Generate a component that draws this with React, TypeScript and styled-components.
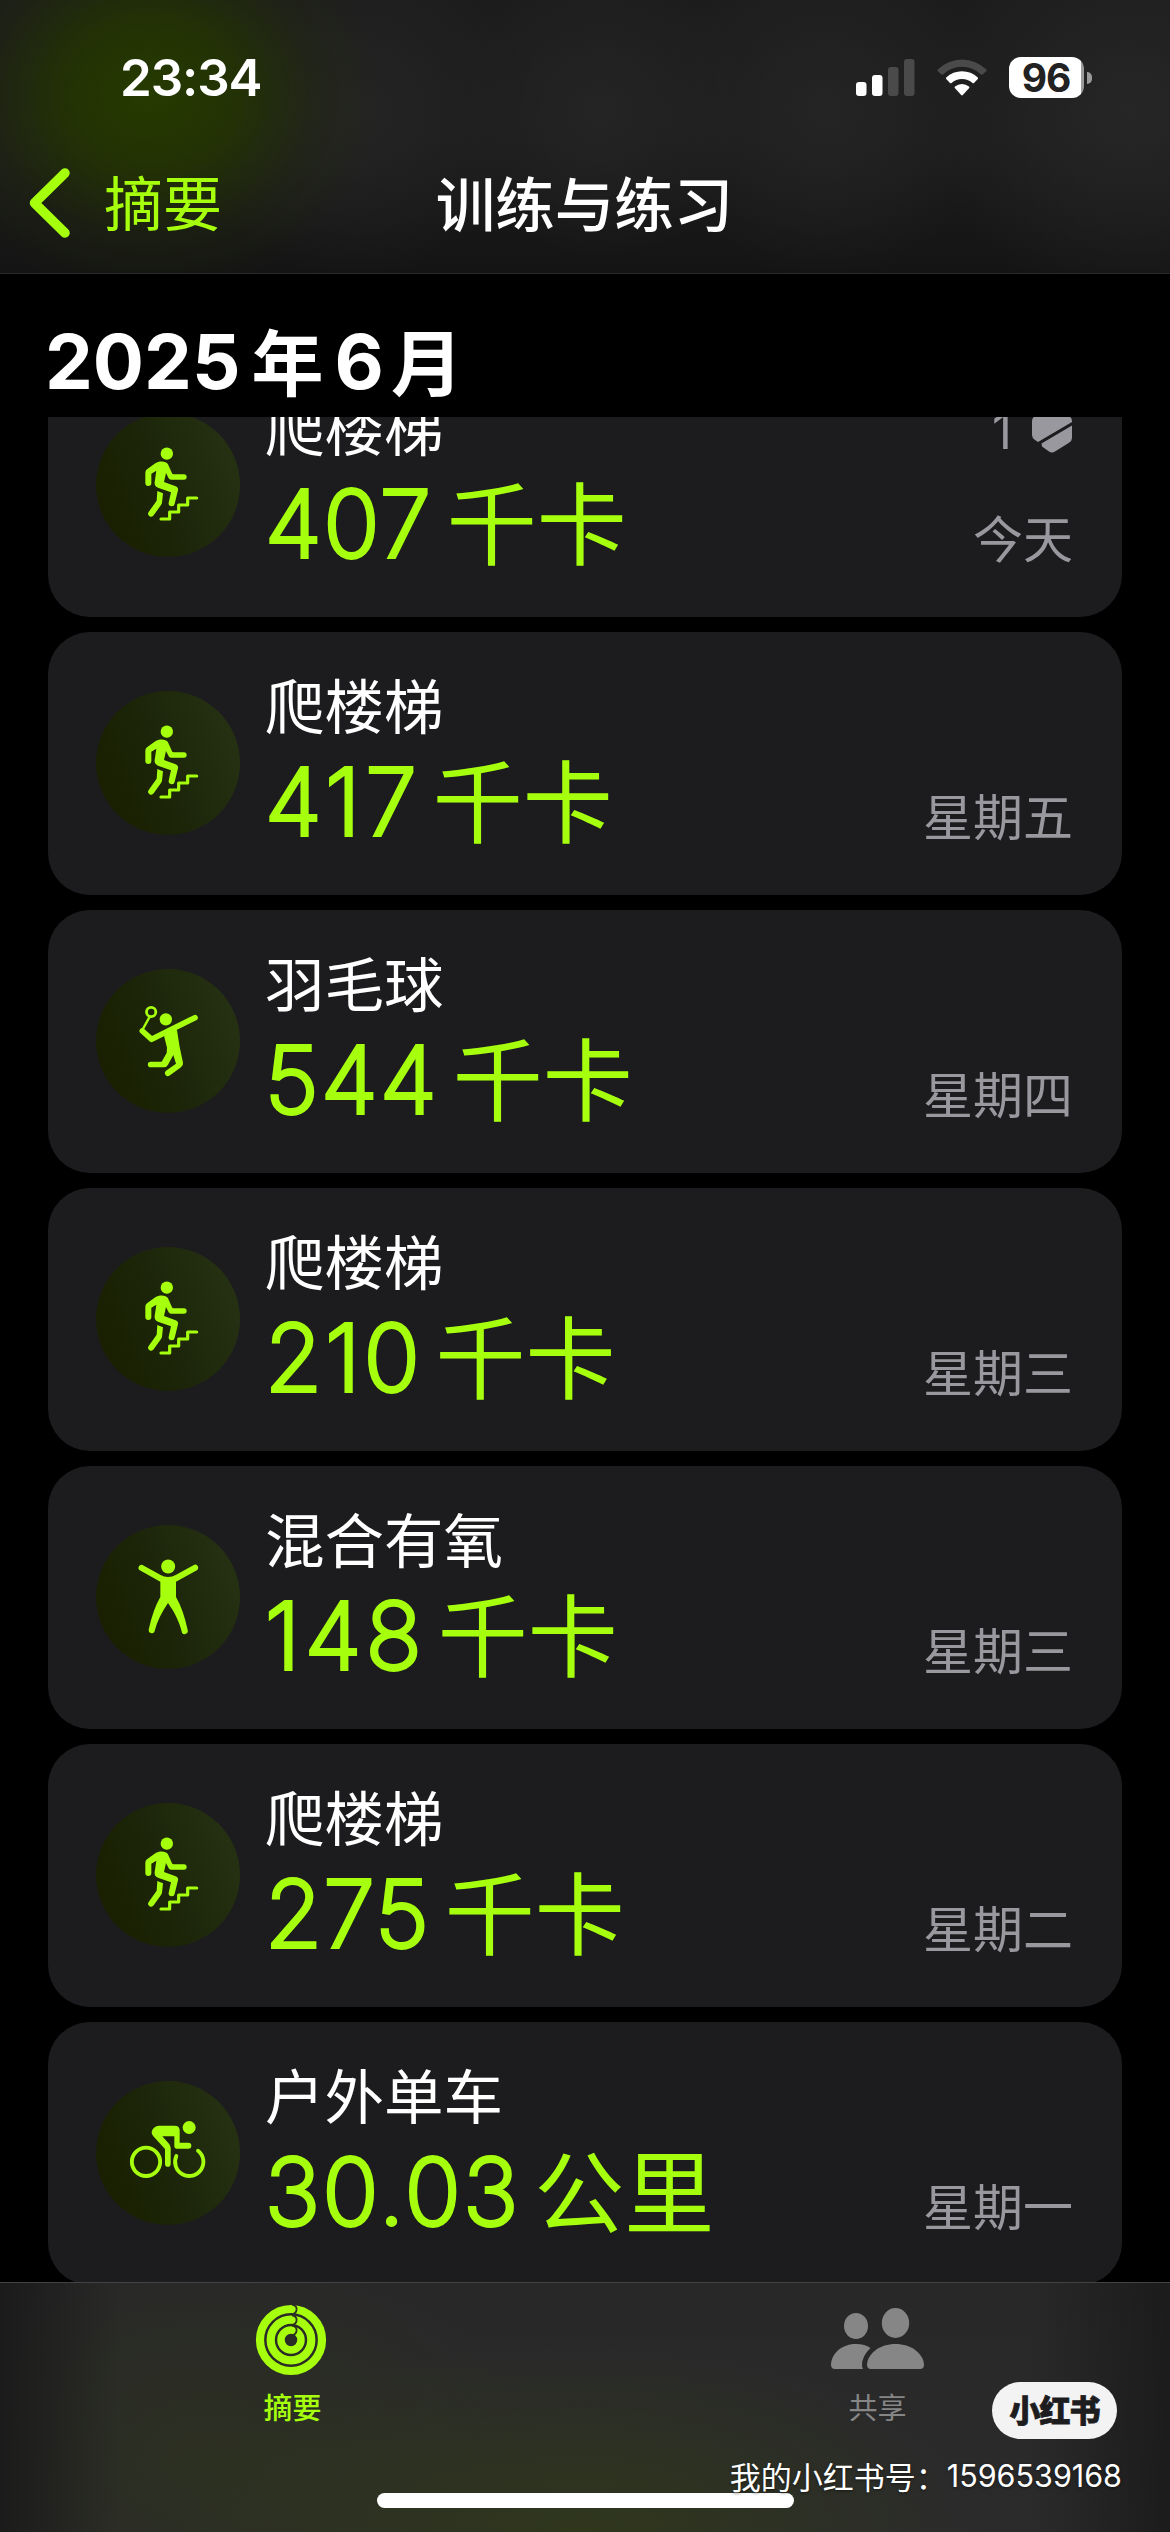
import React from "react";
import styled, { createGlobalStyle } from "styled-components";

const LIME = "#a6ff0d";
const HAN = '"Noto Sans CJK SC", sans-serif';
const LATIN = 'Inter, "Noto Sans CJK SC", sans-serif';

const Global = createGlobalStyle`
  * { box-sizing: border-box; }
  html, body { margin: 0; padding: 0; background: #000; }
  body { font-family: ${LATIN}; color: #fff; }
  svg { display: block; }
`;

const Screen = styled.div`
  position: relative;
  width: 1170px;
  height: 2532px;
  display: flex;
  flex-direction: column;
  overflow: hidden;
  background: #000;
`;

const Header = styled.header`
  flex: none;
  height: 274px;
  display: flex;
  flex-direction: column;
  border-bottom: 1px solid #2a2a2a;
  background:
    radial-gradient(ellipse 230px 200px at 150px 95px, #253a00 0%, rgba(36, 54, 0, 0.85) 35%, rgba(34, 44, 8, 0.35) 70%, rgba(30, 30, 30, 0) 100%),
    radial-gradient(circle 170px at 355px 110px, rgba(37, 37, 37, 0.9), rgba(37, 37, 37, 0)),
    radial-gradient(circle 150px at 600px 110px, rgba(37, 37, 37, 0.9), rgba(37, 37, 37, 0)),
    radial-gradient(circle 170px at 825px 110px, rgba(37, 37, 37, 0.9), rgba(37, 37, 37, 0)),
    radial-gradient(circle 200px at 1130px 110px, rgba(39, 39, 39, 0.9), rgba(39, 39, 39, 0)),
    linear-gradient(#1c1c1c 0%, #1d1d1d 50%, #141414 100%);
`;

const StatusBar = styled.div`
  height: 155px;
  padding: 0 78px 0 120px;
  display: flex;
  align-items: center;
  justify-content: space-between;
`;

const Clock = styled.span`
  font-size: 51px;
  line-height: 60px;
  font-weight: 600;
  letter-spacing: -1.1px;
`;

const StatusIcons = styled.div`
  display: flex;
  align-items: center;
  gap: 22px;
`;

const Battery = styled.div`
  display: flex;
  align-items: center;
  gap: 3px;
`;

const BatteryBody = styled.div`
  width: 75px;
  height: 41px;
  border-radius: 12px;
  background: linear-gradient(90deg, #fff 72px, #9b9b9b 72px);
  color: #222;
  font-size: 39px;
  line-height: 41px;
  font-weight: 700;
  letter-spacing: -1px;
  text-align: center;
  padding-right: 1px;
`;

const BatteryNub = styled.div`
  width: 5px;
  height: 12px;
  border-radius: 0 5px 5px 0;
  background: #9b9b9b;
`;

const NavBar = styled.nav`
  height: 96px;
  padding: 0 28px;
  display: grid;
  grid-template-columns: 1fr auto 1fr;
  align-items: center;
  font-family: ${HAN};
`;

const Back = styled.span`
  display: flex;
  align-items: center;
  gap: 33px;
  color: ${LIME};
  font-size: 59px;
  line-height: 70px;
`;

const BackLabel = styled.span`
  margin-top: -5px;
`;

const NavTitle = styled.h1`
  margin: -5px 0 0 -1px;
  font-size: 59.5px;
  line-height: 70px;
  font-weight: 500;
`;

const MonthHeading = styled.h2`
  flex: none;
  height: 143px;
  margin: 0;
  padding: 31px 0 0 45px;
  display: flex;
  align-items: center;
  font-weight: 700;
  line-height: 76px;
  font-size: 76px;
`;

const MonthDigits = styled.span<{ $gap?: number }>`
  font-weight: 650;
  letter-spacing: 0px;
  margin-right: ${(p) => p.$gap ?? 11}px;
`;

const MonthHan = styled.span<{ $gap?: number }>`
  font-family: ${HAN};
  font-size: 72px;
  margin-top: -5px;
  margin-right: ${(p) => p.$gap ?? 0}px;
`;

const List = styled.main`
  flex: 1;
  min-height: 0;
  overflow: hidden;
  padding: 0 48px;
`;

const Cards = styled.div`
  margin-top: -63px;
  display: flex;
  flex-direction: column;
  gap: 15px;
`;

const Card = styled.article`
  height: 263px;
  flex: none;
  padding: 0 49px 1px 48px;
  display: flex;
  align-items: center;
  border-radius: 42px;
  background: #1c1c1e;
`;

const Disc = styled.div`
  width: 144px;
  height: 144px;
  flex: none;
  border-radius: 50%;
  background: linear-gradient(70deg, #191f00 10%, #1d260a 50%, #263313 95%);
`;

const Info = styled.div`
  flex: 1;
  height: 262px;
  margin-left: 25px;
  padding-top: 36px;
  display: flex;
  flex-direction: column;
`;

const Name = styled.span`
  font-family: ${HAN};
  font-size: 59.5px;
  line-height: 70px;
`;

const Metric = styled.span`
  display: flex;
  align-items: center;
  height: 110px;
  margin-top: 8px;
  line-height: 110px;
  color: ${LIME};
`;

const Digits = styled.span<{ $tracking: number }>`
  font-size: 92.5px;
  font-weight: 200;
  -webkit-text-stroke: 4px ${LIME};
  stroke-linejoin: round;
  letter-spacing: ${(p) => p.$tracking}px;
  margin-right: ${(p) => -p.$tracking}px;
`;

const Unit = styled.span`
  margin: -8px 0 0 16px;
  font-family: ${HAN};
  font-size: 90px;
`;

const Side = styled.div`
  height: 262px;
  padding: 47px 0 50px;
  display: flex;
  flex-direction: column;
  align-items: flex-end;
  justify-content: space-between;
  color: #99989f;
`;

const Award = styled.span`
  display: flex;
  align-items: center;
  gap: 20px;
  height: 60px;
  margin-right: 1px;
  font-size: 49px;
  font-weight: 400;
`;

const Day = styled.span`
  margin-top: auto;
  font-family: ${HAN};
  font-size: 50px;
  line-height: 60px;
  font-weight: 400;
`;

const TabBar = styled.footer`
  flex: none;
  height: 250px;
  display: grid;
  grid-template-columns: 1fr 1fr;
  padding: 21px 0 0;
  border-top: 1px solid #434345;
  background:
    linear-gradient(90deg, rgba(26, 26, 26, 0.95) 0, rgba(28, 28, 28, 0) 120px, rgba(28, 28, 28, 0) 1030px, rgba(26, 26, 26, 0.9) 100%),
    radial-gradient(ellipse 400px 190px at 580px 250px, rgba(48, 56, 26, 0.9), rgba(44, 48, 34, 0)),
    radial-gradient(ellipse 320px 220px at 210px 180px, rgba(44, 48, 32, 0.95), rgba(44, 48, 34, 0)),
    linear-gradient(#282829, #2b2b2c);
`;

const Tab = styled.div<{ $active?: boolean }>`
  display: flex;
  flex-direction: column;
  align-items: center;
  color: ${(p) => (p.$active ? LIME : "#868686")};
  font-family: ${HAN};
  font-size: 29px;
  line-height: 36px;
  font-weight: ${(p) => (p.$active ? 500 : 400)};
`;

const TabIcon = styled.div<{ $nudge?: number; $drop?: number }>`
  height: 84px;
  padding-top: ${(p) => p.$drop ?? 0}px;
  margin-right: ${(p) => p.$nudge ?? 0}px;
`;

const HomeIndicator = styled.div`
  position: absolute;
  left: 377px;
  bottom: 24px;
  width: 417px;
  height: 15px;
  border-radius: 8px;
  background: #fff;
`;

const Watermark = styled.div`
  position: absolute;
  right: 48px;
  bottom: 34px;
  display: flex;
  flex-direction: column;
  align-items: flex-end;
  gap: 14px;
`;

const BrandPill = styled.span`
  width: 125px;
  height: 57px;
  margin-right: 5px;
  border-radius: 29px;
  background: #f3f3f3;
  color: #1d1d1f;
  font-family: ${HAN};
  font-weight: 900;
  font-size: 31px;
  line-height: 54px;
  letter-spacing: -1px;
  -webkit-text-stroke: 0.8px #1d1d1f;
  text-align: center;
`;

const Account = styled.span`
  display: flex;
  align-items: center;
  height: 45px;
  font-family: ${HAN};
  font-size: 31px;
  white-space: nowrap;
  text-shadow: 0 1px 3px rgba(0, 0, 0, 0.5);
`;

const AccountNumber = styled.span`
  font-family: ${LATIN};
  font-size: 30.5px;
  letter-spacing: 0;
`;

type Kind = "stairs" | "badminton" | "cardio" | "cycling";

const StairsIcon = () => (
  <svg width="144" height="144" viewBox="18 34 432 432" fill="none" stroke={LIME} strokeLinecap="round" strokeLinejoin="round">
    <circle cx="230.500" cy="156" r="18.500" fill={LIME} stroke="none" />
    <path d="M196 185 C208 177 228 178 234 188 L246 215 Q247 218 251 218 H282 A8 8 0 0 1 282 234 H243 Q238 234 236 230 L228 214 L222 241 L257 254 Q266 258 264 266 L254 306 A8.500 8.500 0 0 1 236 303 L243 272 L204 258 Q192 253 194 241 L199 207 L184 216 V244 A8.500 8.500 0 0 1 166 244 V213 Q166 206 172 202 Z" fill={LIME} stroke="none" />
    <path d="M202 268 L219 275 L216 303 Q215 307 213 310 L191 341 A9 9 0 0 1 176 331 L200 297 Z" fill={LIME} stroke="none" />
    <path d="M213 352 H239 V331 H266 V310 H293 V289 H320" strokeWidth="9.500" />
  </svg>
);

const BadmintonIcon = () => (
  <svg width="144" height="144" viewBox="18 28 432 432" fill="none" stroke={LIME} strokeLinecap="round" strokeLinejoin="round">
    <circle cx="183.500" cy="157" r="14" strokeWidth="8.500" />
    <circle cx="227.500" cy="179" r="18.500" fill={LIME} stroke="none" />
    <path d="M178 173 L156 213" strokeWidth="7" />
    <path d="M157 214 L185 239 L245 209 L315 174" strokeWidth="17" />
    <path d="M222 228 L250 209 L261 212 L269 262 L279 309 Q280 317 273 323 L238 348 A9 9 0 0 1 227 334 L258 312 L250 286 L234 315 Q230 323 221 323 H182 A8.500 8.500 0 0 1 182 306 H215 L230 280 L231 264 Z" fill={LIME} stroke="none" />
  </svg>
);

const CardioIcon = () => (
  <svg width="144" height="144" viewBox="18 46 432 432" fill={LIME}>
    <circle cx="234.500" cy="170.500" r="21" />
    <path d="M156 165 L212 196 Q222 202 234 202 Q247 202 257 196 L313 165 A9.500 9.500 0 0 1 322 181 L258 216 V262 Q280 300 293 361 A9.500 9.500 0 0 1 276 369 C268 335 253 307 234 280 C216 307 201 335 193 367 A9.500 9.500 0 0 1 176 360 Q189 300 211 262 V216 L148 181 A9.500 9.500 0 0 1 156 165 Z" />
  </svg>
);

const CyclingIcon = () => (
  <svg width="144" height="144" viewBox="18 34 432 432" fill="none" stroke={LIME} strokeLinecap="round" strokeLinejoin="round">
    <circle cx="168" cy="276.500" r="42.500" strokeWidth="11.500" />
    <path d="M324 243 A42.500 42.500 0 1 1 259 259" strokeWidth="11.500" />
    <circle cx="297.500" cy="173.500" r="19.500" fill={LIME} stroke="none" />
    <path d="M207 168 H254 Q268 168 269 181 V219 H295 A9 9 0 0 1 295 237 H261 Q253 237 253 229 V200 H217 L235 220 Q242 227 242 234 V283 A8.500 8.500 0 0 1 225 283 V238 L190 200 Q184 193 185 186 Q190 169 207 168 Z" fill={LIME} stroke="none" />
  </svg>
);

const icons: Record<Kind, React.FC> = {
  stairs: StairsIcon,
  badminton: BadmintonIcon,
  cardio: CardioIcon,
  cycling: CyclingIcon,
};

const SignalIcon = () => (
  <svg width="59" height="37" viewBox="0 0 59 37">
    <rect x="0" y="23" width="10.500" height="14" rx="3" fill="#fff" />
    <rect x="16" y="16" width="10.500" height="21" rx="3" fill="#fff" />
    <rect x="32" y="8" width="10.500" height="29" rx="3" fill="#4a4a4a" />
    <rect x="48" y="0" width="10.500" height="37" rx="3" fill="#4a4a4a" />
  </svg>
);

const WifiIcon = () => (
  <svg width="50" height="37" viewBox="0 0 50 37">
    <path d="M0.600 10.500 A35 35 0 0 1 49.400 10.500 Q50 11.300 49.400 12 L45.500 15.500 Q44.800 16 44 15.400 A27.500 27.500 0 0 0 6 15.400 Q5.200 16 4.500 15.500 L0.600 12 Q0 11.300 0.600 10.500 Z" fill="#4a4a4a" />
    <path d="M9.200 18.500 A23 23 0 0 1 40.800 18.500 Q41.400 19.300 40.800 20 L37 24 Q36.300 24.600 35.500 24 A15.500 15.500 0 0 0 14.500 24 Q13.700 24.600 13 24 L9.200 20 Q8.600 19.300 9.200 18.500 Z" fill="#fff" />
    <path d="M18 27.500 A11 11 0 0 1 32 27.500 Q32.800 28.300 32.200 29 L25.800 36 Q25 36.800 24.200 36 L17.800 29 Q17.200 28.300 18 27.500 Z" fill="#fff" />
  </svg>
);

const ChevronIcon = () => (
  <svg width="43" height="72" viewBox="0 0 43 72" fill="none" stroke={LIME} strokeWidth="9.500" strokeLinecap="round" strokeLinejoin="round">
    <path d="M37 6 L6.500 36 L37 66" />
  </svg>
);

const AwardIcon = () => (
  <svg width="40" height="46" viewBox="0 0 40 46" fill="currentColor">
    <path d="M17 1.500 Q20 0 23 1.500 L37 8 Q40 10 40 13 V14 L6 34 L3 32 Q0 30 0 27 V13 Q0 10 3 8 Z" />
    <path d="M40 17.500 V30 Q40 33 37 34.700 L23 43.500 Q20 45.500 17 43.500 L10 38.500 L9.500 35.500 Z" />
  </svg>
);

const RingsIcon = () => (
  <svg width="72" height="72" viewBox="-36 -36 72 72" fill="none">
    {[31, 20.3, 10].map((r, i) => (
      <React.Fragment key={r}>
        <circle r={r} stroke={LIME} strokeWidth={i === 2 ? 7.5 : 8.2} />
        <path d={`M1 ${-r - 4.3} Q5.600 ${-r - 3.5} 5.600 ${-r} Q5.600 ${-r + 3.8} 2 ${-r + 5}`} stroke="#2b2f22" strokeWidth="1.800" />
      </React.Fragment>
    ))}
  </svg>
);

const PeopleIcon = () => (
  <svg width="93" height="72" viewBox="0 0 93 72" fill="currentColor">
    <ellipse cx="25" cy="18" rx="12" ry="13" />
    <ellipse cx="64.500" cy="15" rx="13.700" ry="15" />
    <path d="M4 61 Q0 61 0 56.500 C1 44 12 36 25 36 Q34 36 39.500 40 Q31 48 31 57 Q31 59.500 32 61 Z" />
    <path d="M40 61 Q36 61 36 56.500 C37 45 49 36 64.500 36 S92 45 93 56.500 Q93 61 89 61 Z" />
  </svg>
);

interface Workout {
  kind: Kind;
  name: string;
  value: string;
  unit: string;
  day: string;
  awards?: number;
  tracking?: number;
}

const workouts: Workout[] = [
  { kind: "stairs", name: "爬楼梯", value: "407", unit: "千卡", day: "今天", awards: 1 },
  { kind: "stairs", name: "爬楼梯", value: "417", unit: "千卡", day: "星期五", tracking: 5 },
  { kind: "badminton", name: "羽毛球", value: "544", unit: "千卡", day: "星期四", tracking: 2.5 },
  { kind: "stairs", name: "爬楼梯", value: "210", unit: "千卡", day: "星期三", tracking: 3.2 },
  { kind: "cardio", name: "混合有氧", value: "148", unit: "千卡", day: "星期三", tracking: 4.5 },
  { kind: "stairs", name: "爬楼梯", value: "275", unit: "千卡", day: "星期二", tracking: 1.5 },
  { kind: "cycling", name: "户外单车", value: "30.03", unit: "公里", day: "星期一", tracking: 2.7 },
];

const WorkoutCard = ({ workout }: { workout: Workout }) => {
  const Icon = icons[workout.kind];
  return (
    <Card>
      <Disc><Icon /></Disc>
      <Info>
        <Name>{workout.name}</Name>
        <Metric>
          <Digits $tracking={workout.tracking ?? 2}>{workout.value}</Digits>
          <Unit>{workout.unit}</Unit>
        </Metric>
      </Info>
      <Side>
        {workout.awards && <Award>{workout.awards}<AwardIcon /></Award>}
        <Day>{workout.day}</Day>
      </Side>
    </Card>
  );
};

export default function App() {
  return (
    <Screen>
      <Global />
      <Header>
        <StatusBar>
          <Clock>23:34</Clock>
          <StatusIcons>
            <SignalIcon />
            <WifiIcon />
            <Battery><BatteryBody>96</BatteryBody><BatteryNub /></Battery>
          </StatusIcons>
        </StatusBar>
        <NavBar>
          <Back><ChevronIcon /><BackLabel>摘要</BackLabel></Back>
          <NavTitle>训练与练习</NavTitle>
        </NavBar>
      </Header>
      <MonthHeading>
        <MonthDigits>2025</MonthDigits>
        <MonthHan $gap={11}>年</MonthHan>
        <MonthDigits $gap={7}>6</MonthDigits>
        <MonthHan>月</MonthHan>
      </MonthHeading>
      <List>
        <Cards>
          {workouts.map((w, i) => <WorkoutCard key={i} workout={w} />)}
        </Cards>
      </List>
      <TabBar>
        <Tab $active><TabIcon $nudge={3}><RingsIcon /></TabIcon>摘要</Tab>
        <Tab><TabIcon $drop={4}><PeopleIcon /></TabIcon>共享</Tab>
      </TabBar>
      <HomeIndicator />
      <Watermark>
        <BrandPill>小红书</BrandPill>
        <Account>我的小红书号：<AccountNumber>1596539168</AccountNumber></Account>
      </Watermark>
    </Screen>
  );
}
